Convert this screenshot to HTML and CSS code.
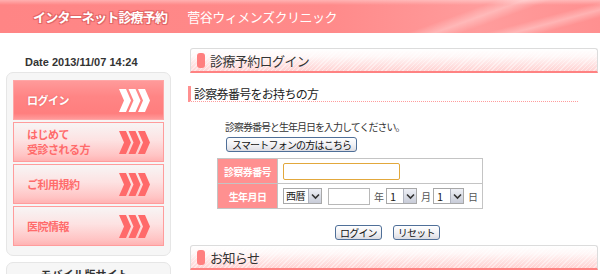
FILE: index.html
```html
<!DOCTYPE html>
<html lang="ja">
<head>
  <meta charset="UTF-8" />
  <title>インターネット診療予約</title>
  <link rel="stylesheet" href="styles.css">
</head>
<body>
  <div class="header">
    <span class="site-title">インターネット診療予約</span>
    <span class="clinic-name">菅谷ウィメンズクリニック</span>
  </div>

  <div class="page">
    <div class="sidebar">
      <div class="date">Date 2013/11/07 14:24</div>
      <div class="menu-panel">
        <a class="menu-item active" href="#"><span>ログイン</span><svg class="chev" width="31" height="23" viewBox="0 0 31 23"><polygon points="0,0 7,0 12,11.5 7,23 0,23 5,11.5" /><polygon points="9.5,0 16.5,0 21.5,11.5 16.5,23 9.5,23 14.5,11.5" /><polygon points="19,0 26,0 31,11.5 26,23 19,23 24,11.5" /></svg></a>
        <a class="menu-item" href="#"><span>はじめて<br>受診される方</span><svg class="chev" width="31" height="23" viewBox="0 0 31 23"><polygon points="0,0 7,0 12,11.5 7,23 0,23 5,11.5" /><polygon points="9.5,0 16.5,0 21.5,11.5 16.5,23 9.5,23 14.5,11.5" /><polygon points="19,0 26,0 31,11.5 26,23 19,23 24,11.5" /></svg></a>
        <a class="menu-item" href="#"><span>ご利用規約</span><svg class="chev" width="31" height="23" viewBox="0 0 31 23"><polygon points="0,0 7,0 12,11.5 7,23 0,23 5,11.5" /><polygon points="9.5,0 16.5,0 21.5,11.5 16.5,23 9.5,23 14.5,11.5" /><polygon points="19,0 26,0 31,11.5 26,23 19,23 24,11.5" /></svg></a>
        <a class="menu-item" href="#"><span>医院情報</span><svg class="chev" width="31" height="23" viewBox="0 0 31 23"><polygon points="0,0 7,0 12,11.5 7,23 0,23 5,11.5" /><polygon points="9.5,0 16.5,0 21.5,11.5 16.5,23 9.5,23 14.5,11.5" /><polygon points="19,0 26,0 31,11.5 26,23 19,23 24,11.5" /></svg></a>
      </div>
      <div class="mobile-panel">モバイル版サイト</div>
    </div>

    <div class="main">
      <h2 class="box-title"><span class="mark"></span>診療予約ログイン</h2>

      <h3 class="sub-title">診察券番号をお持ちの方</h3>

      <div class="login-form">
        <p class="note">診察券番号と生年月日を入力してください。</p>
        <button class="btn sp-btn">スマートフォンの方はこちら</button>

        <table class="form-table">
          <tr>
            <th>診察券番号</th>
            <td><input type="text" id="card_no" class="card-input" /></td>
          </tr>
          <tr>
            <th>生年月日</th>
            <td>
              <div class="birth">
                <span class="sel era"><select><option>西暦</option><option>平成</option><option>昭和</option></select><span class="arr"><svg width="9" height="7" viewBox="0 0 9 7"><path d="M1 1.5 L4.5 5 L8 1.5" fill="none" stroke="#333" stroke-width="1.6" /></svg></span></span>
                <input type="text" id="year" class="year-input" />
                <span class="unit">年</span>
                <span class="sel num"><select><option>1</option><option>2</option><option>3</option></select><span class="arr"><svg width="9" height="7" viewBox="0 0 9 7"><path d="M1 1.5 L4.5 5 L8 1.5" fill="none" stroke="#333" stroke-width="1.6" /></svg></span></span>
                <span class="unit">月</span>
                <span class="sel num"><select><option>1</option><option>2</option><option>3</option></select><span class="arr"><svg width="9" height="7" viewBox="0 0 9 7"><path d="M1 1.5 L4.5 5 L8 1.5" fill="none" stroke="#333" stroke-width="1.6" /></svg></span></span>
                <span class="unit">日</span>
              </div>
            </td>
          </tr>
        </table>

        <div class="actions">
          <button class="btn">ログイン</button>
          <button class="btn">リセット</button>
        </div>
      </div>

      <h2 class="box-title news-title"><span class="mark"></span>お知らせ</h2>
    </div>
  </div>
</body>
</html>
```

FILE: styles.css
```css
body {
  margin: 0;
  font-family: 'Liberation Sans', 'Noto Sans CJK JP', sans-serif;
  background-color: #fff;
  color: #333;
  overflow: hidden;
}
.header {
  height: 33px;
  display: flex;
  align-items: center;
  padding-left: 33px;
  box-sizing: border-box;
  background:
    linear-gradient(to bottom, rgba(255,255,255,0.35) 0, rgba(255,255,255,0) 5px),
    linear-gradient(160deg, rgba(255,255,255,0) 72%, rgba(255,255,255,0.3) 76%, rgba(255,255,255,0) 80%),
    linear-gradient(165deg, rgba(255,255,255,0) 84%, rgba(255,255,255,0.3) 88%, rgba(255,255,255,0) 92%),
    linear-gradient(to right, #ff8585 0%, #ff8a8a 55%, #ff9c9c 80%, #ff9090 100%);
}
.site-title {
  font-family: 'Noto Sans CJK JP', sans-serif;
  font-weight: bold;
  font-size: 13px;
  letter-spacing: -0.8px;
  color: #fff;
  text-shadow: 0 0 2px #e05a5a, 1px 1px 0 #e46a6a, -1px -1px 0 #e46a6a, 1px -1px 0 #e46a6a, -1px 1px 0 #e46a6a;
}
.clinic-name {
  font-family: 'Noto Sans CJK JP', sans-serif;
  font-size: 13px;
  letter-spacing: -0.5px;
  color: #fff;
  margin-left: 20px;
}
.page {
  display: flex;
  align-items: flex-start;
}
.sidebar {
  width: 165px;
  margin-left: 6px;
  flex-shrink: 0;
}
.date {
  font-size: 11px;
  font-weight: bold;
  color: #333;
  margin-top: 22px;
  padding-left: 19px;
  line-height: 14px;
  height: 17px;
}
.menu-panel {
  background-color: #f6f6f6;
  border: 1px solid #e6e6e6;
  border-radius: 7px;
  padding: 7px 6px 9px;
}
.menu-item {
  display: flex;
  align-items: center;
  justify-content: space-between;
  height: 40px;
  box-sizing: border-box;
  padding: 0 13px 0 13px;
  margin-bottom: 2px;
  border: 1px solid #ff9c9c;
  text-decoration: none;
  font-family: 'Noto Sans CJK JP', sans-serif;
  font-size: 11px;
  font-weight: bold;
  line-height: 15px;
  letter-spacing: -0.5px;
  color: #ff6b6b;
  background: linear-gradient(to bottom, #f7f5f5 0%, #fde2e2 45%, #ffc4c4 85%, #ffb3b3 100%);
}
.menu-item:last-child {
  margin-bottom: 0;
}
.menu-item .chev {
  fill: #ff6a6a;
}
.menu-item.active {
  color: #fff;
  text-shadow: 0 0 2px #e06060;
  background: linear-gradient(to bottom, #ff9a9a 0%, #ff8585 40%, #ff7e7e 85%, #ff9a9a 100%);
  border-color: #ffa6a6;
}
.menu-item.active .chev {
  fill: #fff;
}
.mobile-panel {
  margin-top: 6px;
  height: 30px;
  background-color: #f6f6f6;
  border: 1px solid #e6e6e6;
  border-radius: 7px;
  font-family: 'Noto Sans CJK JP', sans-serif;
  font-size: 11px;
  font-weight: bold;
  text-align: center;
  padding-top: 3px;
  padding-right: 8px;
  box-sizing: border-box;
}
.main {
  margin-left: 17px;
  width: 410px;
  flex-shrink: 0;
}
.box-title {
  margin: 15px 0 0 2px;
  height: 25px;
  box-sizing: border-box;
  display: flex;
  align-items: center;
  padding-left: 6px;
  border: 1px solid #dcdcdc;
  border-bottom: 2px solid #ff8282;
  border-radius: 3px 3px 0 0;
  font-family: 'Noto Sans CJK JP', sans-serif;
  font-size: 13px;
  font-weight: normal;
  letter-spacing: -0.6px;
  color: #333;
  background:
    repeating-linear-gradient(-45deg, rgba(255,255,255,0) 0, rgba(255,255,255,0) 2px, rgba(255,255,255,0.45) 2px, rgba(255,255,255,0.45) 3px),
    linear-gradient(to bottom, #ffffff 0%, #fff6f6 35%, #ffd2d2 100%);
}
.box-title.news-title {
  margin-top: 5px;
}
.box-title .mark {
  width: 8px;
  height: 15px;
  border-radius: 3px;
  background-color: #ff7f7f;
  margin-right: 5px;
}
.sub-title {
  margin: 13px 20px 0 0;
  height: 15px;
  display: flex;
  align-items: center;
  padding-left: 3px;
  border-left: 3px solid #ff9090;
  border-bottom: 1px dotted #ff9c9c;
  font-family: 'Noto Sans CJK JP', sans-serif;
  font-size: 12px;
  font-weight: normal;
  letter-spacing: -0.7px;
  color: #222;
  line-height: 14px;
}
.login-form {
  padding-left: 29px;
}
.note {
  margin: 18px 0 0 8px;
  font-family: 'Noto Sans CJK JP', sans-serif;
  font-size: 10px;
  letter-spacing: -1px;
  line-height: 14px;
  color: #333;
}
.btn {
  font-family: 'Noto Sans CJK JP', sans-serif;
  font-size: 10px;
  letter-spacing: -0.8px;
  line-height: 12px;
  height: 15px;
  padding: 0 4px;
  white-space: nowrap;
  color: #111;
  border: 1px solid #4f6f98;
  border-radius: 3px;
  background: linear-gradient(to bottom, #ffffff 0%, #f2f2f5 50%, #dcdce2 100%);
}
.sp-btn {
  margin: 3px 0 0 9px;
  display: block;
  padding: 0 5px;
}
.form-table {
  margin-top: 6px;
  border-collapse: collapse;
  width: 266px;
}
.form-table th,
.form-table td {
  border: 1px solid #c4c4c4;
  height: 24px;
  padding: 0;
}
.form-table th {
  width: 59px;
  white-space: nowrap;
  background-color: #ff9090;
  color: #fff;
  font-family: 'Noto Sans CJK JP', sans-serif;
  font-size: 10px;
  font-weight: bold;
  letter-spacing: -0.6px;
  text-align: center;
}
.form-table td {
  padding-left: 5px;
}
.card-input {
  width: 117px;
  height: 17px;
  box-sizing: border-box;
  border: 1px solid #e2a83c;
  border-radius: 2px;
  display: block;
  padding: 0 4px;
  font-size: 11px;
}
.birth {
  display: flex;
  align-items: center;
  font-family: 'Noto Sans CJK JP', sans-serif;
  font-size: 10px;
  color: #555;
}
.sel {
  display: flex;
  align-items: stretch;
  height: 16px;
  box-sizing: border-box;
  border: 1px solid #a8a8a8;
  background-color: #fff;
  flex-shrink: 0;
}
.sel select {
  appearance: none;
  -webkit-appearance: none;
  border: none;
  background: transparent;
  padding: 0 0 0 3px;
  margin: 0;
  font-family: 'Noto Sans CJK JP', sans-serif;
  font-size: 11px;
  line-height: 14px;
  color: #222;
  flex: 1;
  min-width: 0;
  outline: none;
}
.sel.era select {
  font-size: 10px;
  padding-left: 2px;
  letter-spacing: -0.5px;
}
.sel .arr {
  width: 12px;
  display: flex;
  align-items: center;
  justify-content: center;
  background: linear-gradient(to bottom, #eef0f6, #c8ccd8);
  border-left: 1px solid #b0b4c0;
}
.sel.era {
  width: 39px;
}
.sel.num {
  width: 31px;
}
.year-input {
  width: 42px;
  height: 17px;
  box-sizing: border-box;
  border: 1px solid #b8b8b8;
  margin-left: 6px;
  flex-shrink: 0;
}
.unit {
  margin: 0 2px 0 4px;
}
.actions {
  display: flex;
  gap: 11px;
  margin-top: 16px;
  padding-left: 118px;
}
```
